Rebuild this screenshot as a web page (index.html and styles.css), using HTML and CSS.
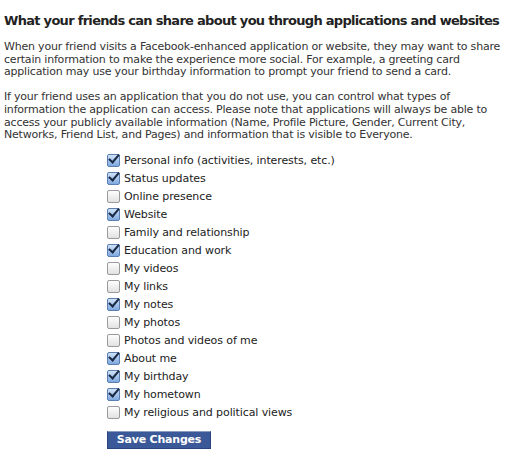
FILE: index.html
```html
<!DOCTYPE html>
<html>
<head>
<meta charset="utf-8">
<link rel="stylesheet" href="styles.css">
</head>
<body>
<div class="page">
  <h2 class="title">What your friends can share about you through applications and websites</h2>
  <p class="para">When your friend visits a Facebook-enhanced application or website, they may want to share certain information to make the experience more social. For example, a greeting card application may use your birthday information to prompt your friend to send a card.</p>
  <p class="para para-last">If your friend uses an application that you do not use, you can control what types of information the application can access. Please note that applications will always be able to access your publicly available information (Name, Profile Picture, Gender, Current City, Networks, Friend List, and Pages) and information that is visible to Everyone.</p>
  <ul class="opts">
    <li class="opt"><span class="cb on"></span>Personal info (activities, interests, etc.)</li>
    <li class="opt"><span class="cb on"></span>Status updates</li>
    <li class="opt"><span class="cb"></span>Online presence</li>
    <li class="opt"><span class="cb on"></span>Website</li>
    <li class="opt"><span class="cb"></span>Family and relationship</li>
    <li class="opt"><span class="cb on"></span>Education and work</li>
    <li class="opt"><span class="cb"></span>My videos</li>
    <li class="opt"><span class="cb"></span>My links</li>
    <li class="opt"><span class="cb on"></span>My notes</li>
    <li class="opt"><span class="cb"></span>My photos</li>
    <li class="opt"><span class="cb"></span>Photos and videos of me</li>
    <li class="opt"><span class="cb on"></span>About me</li>
    <li class="opt"><span class="cb on"></span>My birthday</li>
    <li class="opt"><span class="cb on"></span>My hometown</li>
    <li class="opt"><span class="cb"></span>My religious and political views</li>
  </ul>
  <div class="actions"><button class="save">Save Changes</button></div>
</div>
</body>
</html>
```
FILE: styles.css
```css
html, body { margin: 0; padding: 0; background: #fff; }
body { font-family: "DejaVu Sans", sans-serif; color: #333; font-size: 11px; }
.page { padding: 13px 4px 0 4px; width: 505px; }
.title { margin: 0 0 12px 0; font-size: 13px; font-weight: bold; color: #222; line-height: 16px; letter-spacing: -0.7px; white-space: nowrap; }
.para { margin: 0 0 12px 0; line-height: 12.7px; letter-spacing: -0.2px; }
.para-last { margin-bottom: 10px; }
.opts { list-style: none; margin: 0 0 0 103px; padding: 0; }
.opt { display: flex; align-items: center; height: 18px; gap: 4px; color: #222; letter-spacing: -0.1px; }
.cb { width: 11px; height: 11px; border: 1px solid #9a9a9a; border-radius: 2px; background: linear-gradient(#fdfdfd, #e2e2e2); box-sizing: content-box; position: relative; }
.cb.on { border-color: #5a7fb0; background: linear-gradient(#cfe2f8, #7fa8df); }
.cb.on::after { content: ""; position: absolute; left: 3px; top: -3px; width: 4px; height: 9px; border-right: 2.5px solid #1b2a44; border-bottom: 2.5px solid #1b2a44; transform: rotate(40deg); }
.actions { margin: 9px 0 0 103px; }
.save { display: block; font-family: "DejaVu Sans", sans-serif; font-size: 11px; font-weight: bold; color: #fff; background: #3b5998; border: 1px solid #29447e; border-top-color: #8a9cc2; padding: 0; height: 18px; width: 104px; white-space: nowrap; letter-spacing: -0.2px; cursor: pointer; }
```
